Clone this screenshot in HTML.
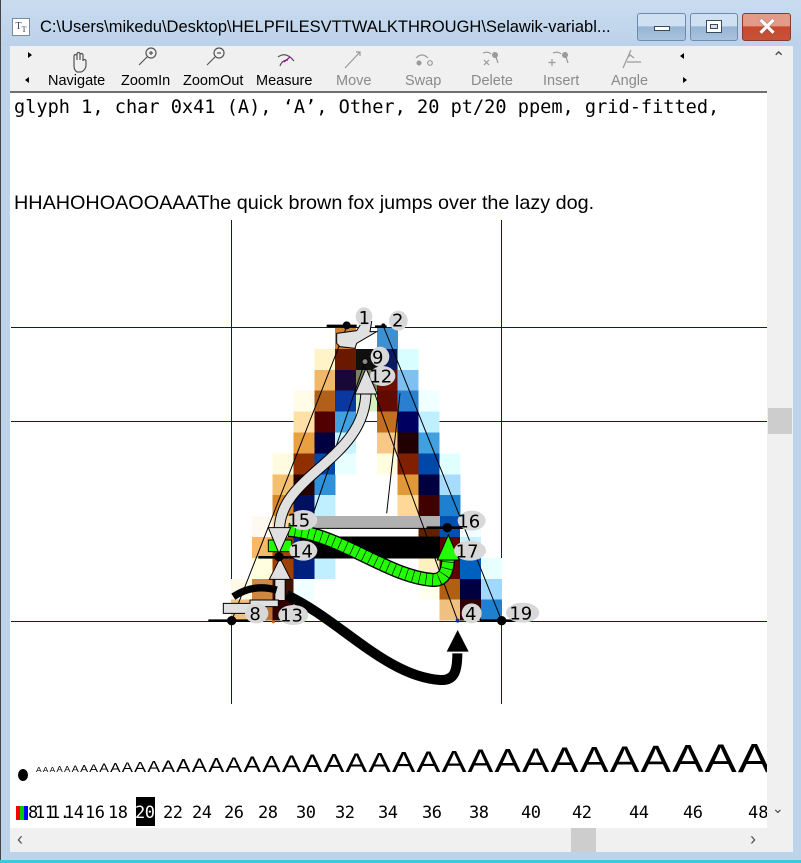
<!DOCTYPE html>
<html><head><meta charset="utf-8"><style>
*{margin:0;padding:0;box-sizing:border-box}
body{width:801px;height:863px;overflow:hidden;background:#bcd3ea;position:relative;font-family:"Liberation Sans",sans-serif}
.a{position:absolute}
.tb{font-size:14.5px;top:73px;white-space:nowrap}
.g{color:#8a8a8a}
.num{font-family:"DejaVu Sans Mono","Liberation Mono",monospace;font-size:17px;top:803px;letter-spacing:-0.5px}
</style></head><body>
<div class="a" style="left:0;top:0;width:801px;height:46px;background:linear-gradient(#c9dbef,#bcd2ea)"></div>
<div class="a" style="left:0;top:0;width:1px;height:863px;background:#444"></div>
<div class="a" style="left:12px;top:18px;width:18px;height:18px;border:1px solid #7a8a9a;background:#fff;font:10px 'Liberation Serif',serif;color:#345;line-height:15px;text-align:center">T<sub style="font-size:8px">T</sub></div>
<div class="a" style="left:40px;top:18px;font-size:16.5px;color:#000;white-space:nowrap">C:\Users\mikedu\Desktop\HELPFILESVTTWALKTHROUGH\Selawik-variabl...</div>
<div class="a" style="left:637px;top:13px;width:49px;height:28px;border:1px solid #6d8bad;border-radius:3px;background:linear-gradient(#cfe0f3 45%,#98b4d4 50%,#a9c2df)"></div>
<div class="a" style="left:654px;top:26px;width:16px;height:5px;background:#fff;border:1px solid #3a4a5a"></div>
<div class="a" style="left:690px;top:13px;width:48px;height:28px;border:1px solid #6d8bad;border-radius:3px;background:linear-gradient(#cfe0f3 45%,#98b4d4 50%,#a9c2df)"></div>
<div class="a" style="left:706px;top:20px;width:16px;height:13px;background:#fff;border:1px solid #3a4a5a"><div style="margin:3px;height:5px;border:1px solid #3a4a5a;background:#cfe0f3"></div></div>
<div class="a" style="left:742px;top:13px;width:49px;height:28px;border:1px solid #8a3a2a;border-radius:3px;background:linear-gradient(#e49a88 45%,#c8492e 50%,#c6523a)"></div>
<div class="a" style="left:757px;top:13px;font:bold 24px 'Liberation Sans',sans-serif;color:#fff;text-shadow:0 0 1px #333">✕</div>

<div class="a" style="left:10px;top:46px;width:783px;height:806px;background:#f0f0f0"></div>
<div class="a" style="left:10px;top:91px;width:757px;height:2px;background:#707070"></div>
<div class="a" style="left:10px;top:93px;width:757px;height:735px;background:#fff"></div>

<div class="a" style="left:28px;top:52px;border-left:4px solid #000;border-top:3px solid transparent;border-bottom:3px solid transparent"></div>
<div class="a" style="left:25px;top:77px;border-right:4px solid #000;border-top:3px solid transparent;border-bottom:3px solid transparent"></div>
<div class="a" style="left:680px;top:53px;border-right:4px solid #000;border-top:3px solid transparent;border-bottom:3px solid transparent"></div>
<div class="a" style="left:683px;top:77px;border-left:4px solid #000;border-top:3px solid transparent;border-bottom:3px solid transparent"></div>

<svg class="a" style="left:0;top:44px" width="700" height="30" viewBox="0 44 700 30" fill="none" stroke="#555" stroke-width="1.2">
<path d="M74 66 v-10 a1.5 1.5 0 0 1 3 0 v4 v-6 a1.5 1.5 0 0 1 3 0 v6 v-5 a1.5 1.5 0 0 1 3 0 v6 a1.5 1.5 0 0 1 3 0 v4 q0 5 -5 7 h-4 q-3 -2 -3 -6z"/>
<circle cx="151" cy="53" r="5"/><path d="M147 57 l-8 8 M149 53 h4 M151 51 v4"/>
<circle cx="219" cy="53" r="5"/><path d="M215 57 l-8 8 M217 53 h4"/>
<path d="M278 57 q8 -6 16 4 M280 66 q2 -6 8 -6" /><path d="M284 62 l6 -5" stroke="#b000b0"/>
<path d="M345 68 l15 -16 M356 52 h4 v4" stroke="#999"/>
<path d="M416 58 q6 -6 12 0" stroke="#999"/><circle cx="419" cy="63" r="2.5" fill="#999" stroke="none"/><circle cx="430" cy="63" r="2.3" stroke="#999"/>
<path d="M483 53 q5 -2 8 1 M484 65 l5 -5 M489 65 l-5 -5" stroke="#999"/><circle cx="495" cy="55" r="3" fill="#999" stroke="none"/><path d="M496 57 l2 6" stroke="#999"/>
<path d="M553 53 q5 -2 8 1 M552 66 v-7 M548.5 62.5 h7" stroke="#999"/><circle cx="565" cy="55" r="3" fill="#999" stroke="none"/><path d="M566 57 l2 6"  stroke="#999"/>
<path d="M623 68 l8 -18 M627 62 h14 M629 54 l5 4 M629 54 v3" stroke="#999"/>
</svg>
<div class="a tb" style="left:48px">Navigate</div>
<div class="a tb" style="left:121px">ZoomIn</div>
<div class="a tb" style="left:183px">ZoomOut</div>
<div class="a tb" style="left:256px">Measure</div>
<div class="a tb g" style="left:336px">Move</div>
<div class="a tb g" style="left:405px">Swap</div>
<div class="a tb g" style="left:471px">Delete</div>
<div class="a tb g" style="left:543px">Insert</div>
<div class="a tb g" style="left:611px">Angle</div>

<div class="a" style="left:768px;top:408px;width:24px;height:26px;background:#cdcdcd"></div>
<div class="a" style="left:772px;top:48px;font-size:16px;color:#444">&#8963;</div>
<div class="a" style="left:772px;top:800px;font-size:14px;color:#444">&#8964;</div>
<div class="a" style="left:10px;top:828px;width:757px;height:24px;background:#f0f0f0"></div>
<div class="a" style="left:571px;top:828px;width:25px;height:24px;background:#cdcdcd"></div>
<div class="a" style="left:17px;top:829px;font-size:18px;color:#555">‹</div>
<div class="a" style="left:750px;top:829px;font-size:18px;color:#555">›</div>
<div class="a" style="left:0;top:860px;width:801px;height:3px;background:#3cc8e0"></div>

<div class="a" style="left:14px;top:97px;font-family:'DejaVu Sans Mono','Liberation Mono',monospace;font-size:18.6px;white-space:nowrap">glyph 1, char 0x41 (A), ‘A’, Other, 20 pt/20 ppem, grid-fitted,</div>
<div class="a" style="left:14px;top:192px;font-size:19.8px;white-space:nowrap">HHAHOHOAOOAAAThe quick brown fox jumps over the lazy dog.</div>

<div class="a" style="left:231px;top:220px;width:1px;height:484px;background:#0000e0"></div>
<div class="a" style="left:501px;top:220px;width:1px;height:484px;background:#0000e0"></div>
<div class="a" style="left:11px;top:327px;width:756px;height:1px;background:#0000e0"></div>
<div class="a" style="left:11px;top:421px;width:756px;height:1px;background:#0000e0"></div>
<div class="a" style="left:11px;top:621px;width:756px;height:1px;background:#0000e0"></div>

<svg class="a" style="left:200px;top:300px" width="350" height="400" viewBox="0 0 1050 1200">
<g shape-rendering="crispEdges">
<rect x="405.5" y="84" width="63" height="63" fill="#d08030"/><rect x="530.5" y="84" width="63" height="63" fill="#4090d0"/>
<rect x="343" y="146.7" width="63" height="63" fill="#fff4c8"/><rect x="405.5" y="146.7" width="63" height="63" fill="#6a1800"/><rect x="468" y="146.7" width="63" height="63" fill="#101010"/><rect x="530.5" y="146.7" width="63" height="63" fill="#0a1a60"/><rect x="593" y="146.7" width="63" height="63" fill="#d8ffff"/>
<rect x="343" y="209.4" width="63" height="63" fill="#f0b868"/><rect x="405.5" y="209.4" width="63" height="63" fill="#180838"/><rect x="468" y="209.4" width="63" height="63" fill="#808060"/><rect x="530.5" y="209.4" width="63" height="63" fill="#701000"/><rect x="593" y="209.4" width="63" height="63" fill="#80c0f0"/>
<rect x="280.5" y="272.1" width="63" height="63" fill="#fffde8"/><rect x="343" y="272.1" width="63" height="63" fill="#b06018"/><rect x="405.5" y="272.1" width="63" height="63" fill="#0838a0"/><rect x="468" y="272.1" width="63" height="63" fill="#d8f0c0"/><rect x="530.5" y="272.1" width="63" height="63" fill="#600a00"/><rect x="593" y="272.1" width="63" height="63" fill="#2a80d0"/><rect x="655.5" y="272.1" width="63" height="63" fill="#f0ffff"/>
<rect x="280.5" y="334.8" width="63" height="63" fill="#ffe0a8"/><rect x="343" y="334.8" width="63" height="63" fill="#500000"/><rect x="405.5" y="334.8" width="63" height="63" fill="#40a0e0"/><rect x="530.5" y="334.8" width="63" height="63" fill="#c07020"/><rect x="593" y="334.8" width="63" height="63" fill="#000060"/><rect x="655.5" y="334.8" width="63" height="63" fill="#c0f0ff"/>
<rect x="280.5" y="397.5" width="63" height="63" fill="#e8a040"/><rect x="343" y="397.5" width="63" height="63" fill="#000040"/><rect x="405.5" y="397.5" width="63" height="63" fill="#c8f4ff"/><rect x="530.5" y="397.5" width="63" height="63" fill="#f8c888"/><rect x="593" y="397.5" width="63" height="63" fill="#200000"/><rect x="655.5" y="397.5" width="63" height="63" fill="#40a0e0"/>
<rect x="218" y="460.2" width="63" height="63" fill="#fffbe0"/><rect x="280.5" y="460.2" width="63" height="63" fill="#903000"/><rect x="343" y="460.2" width="63" height="63" fill="#0048a8"/><rect x="405.5" y="460.2" width="63" height="63" fill="#e8ffff"/><rect x="530.5" y="460.2" width="63" height="63" fill="#ffffe0"/><rect x="593" y="460.2" width="63" height="63" fill="#802000"/><rect x="655.5" y="460.2" width="63" height="63" fill="#0048a8"/><rect x="718" y="460.2" width="63" height="63" fill="#e0ffff"/>
<rect x="218" y="522.9" width="63" height="63" fill="#f4c070"/><rect x="280.5" y="522.9" width="63" height="63" fill="#280000"/><rect x="343" y="522.9" width="63" height="63" fill="#3090d8"/><rect x="593" y="522.9" width="63" height="63" fill="#e09838"/><rect x="655.5" y="522.9" width="63" height="63" fill="#000040"/><rect x="718" y="522.9" width="63" height="63" fill="#a8dcff"/>
<rect x="218" y="585.6" width="63" height="63" fill="#d88828"/><rect x="280.5" y="585.6" width="63" height="63" fill="#001060"/><rect x="343" y="585.6" width="63" height="63" fill="#c0f0ff"/><rect x="593" y="585.6" width="63" height="63" fill="#ffd898"/><rect x="655.5" y="585.6" width="63" height="63" fill="#400000"/><rect x="718" y="585.6" width="63" height="63" fill="#2080d0"/>
<rect x="155.5" y="648.3" width="63" height="63" fill="#fffaf0"/><rect x="218" y="648.3" width="63" height="63" fill="#ffd8a0"/><rect x="280.5" y="648.3" width="63" height="63" fill="#6a2000"/><rect x="655.5" y="648.3" width="63" height="63" fill="#602000"/><rect x="718" y="648.3" width="63" height="63" fill="#0050b0"/><rect x="780.5" y="648.3" width="63" height="63" fill="#f0ffff"/>
<rect x="155.5" y="711" width="63" height="63" fill="#f8b868"/><rect x="218" y="711" width="63" height="63" fill="#a04800"/><rect x="280.5" y="711" width="63" height="63" fill="#002080"/><rect x="718" y="711" width="63" height="63" fill="#600000"/><rect x="780.5" y="711" width="63" height="63" fill="#c8f0ff"/>
<rect x="155.5" y="773.7" width="63" height="63" fill="#ffffe0"/><rect x="218" y="773.7" width="63" height="63" fill="#a04000"/><rect x="280.5" y="773.7" width="63" height="63" fill="#002080"/><rect x="343" y="773.7" width="63" height="63" fill="#c0f0ff"/><rect x="655.5" y="773.7" width="63" height="63" fill="#fff0c0"/><rect x="718" y="773.7" width="63" height="63" fill="#600000"/><rect x="780.5" y="773.7" width="63" height="63" fill="#0060c0"/><rect x="843" y="773.7" width="63" height="63" fill="#e8ffff"/>
<rect x="93" y="836.4" width="63" height="63" fill="#fffae8"/><rect x="155.5" y="836.4" width="63" height="63" fill="#d08840"/><rect x="218" y="836.4" width="63" height="63" fill="#401000"/><rect x="280.5" y="836.4" width="63" height="63" fill="#f0ffff"/><rect x="655.5" y="836.4" width="63" height="63" fill="#fffff0"/><rect x="718" y="836.4" width="63" height="63" fill="#b06010"/><rect x="780.5" y="836.4" width="63" height="63" fill="#000040"/><rect x="843" y="836.4" width="63" height="63" fill="#a0d8ff"/>
<rect x="93" y="899.1" width="63" height="63" fill="#f0c080"/><rect x="155.5" y="899.1" width="63" height="63" fill="#c07030"/><rect x="218" y="899.1" width="63" height="63" fill="#300000"/><rect x="718" y="899.1" width="63" height="63" fill="#f0c080"/><rect x="780.5" y="899.1" width="63" height="63" fill="#300000"/><rect x="843" y="899.1" width="63" height="63" fill="#2080d0"/>
<rect x="340" y="648" width="380" height="37" fill="#b0b0b0"/>
<rect x="300" y="710" width="420" height="65" fill="#000"/>
</g>
<g stroke="#000" stroke-width="3" fill="none">
<path d="M440 80 L95 962 M550 78 L905 962 M495 185 L340 640 M520 270 L773 962 M270 685 L742 685 M600 280 L560 640"/>
</g>
<path d="M260 885 C420 960 560 1130 720 1140 C760 1142 772 1120 772 1060" stroke="#000" stroke-width="30" fill="none"/>
<path d="M740 1055 L773 990 L806 1055 Z" fill="#000"/>
<path d="M265 690 C420 700 560 830 700 840 C740 840 745 800 745 760" stroke="#000" stroke-width="42" fill="none"/>
<path d="M265 690 C420 700 560 830 700 840 C740 840 745 800 745 760" stroke="#22ff00" stroke-width="34" fill="none"/>
<path d="M265 690 C420 700 560 830 700 840 C740 840 745 800 745 760" stroke="#000" stroke-width="34" stroke-dasharray="2 18" fill="none"/>
<path d="M712 780 L745 705 L778 780 Z" fill="#22ff00" stroke="#000" stroke-width="3"/>
<path d="M205 755 V720 H275 V755 Z" fill="#22ff00" stroke="#000" stroke-width="3"/>
<g fill="none" stroke-linecap="butt">
<path d="M498 270 C500 480 240 520 238 690" stroke="#000" stroke-width="34"/>
<path d="M498 270 C500 480 240 520 238 690" stroke="#e0e0e0" stroke-width="28"/>
<path d="M240 900 V835" stroke="#000" stroke-width="34"/>
<path d="M240 900 V835" stroke="#e0e0e0" stroke-width="28"/>
<path d="M100 890 Q160 850 230 870" stroke="#000" stroke-width="22"/>
</g>
<path d="M205 683 L237 760 L272 683 Z" fill="#e0e0e0" stroke="#000" stroke-width="3"/>
<path d="M208 838 L240 775 L272 838 Z" fill="#e0e0e0" stroke="#000" stroke-width="3"/>
<path d="M465 282 L498 205 L532 282 Z" fill="#e0e0e0" stroke="#000" stroke-width="3"/>
<path d="M70 910 H150 V900 H235 V920 H150 V940 H70 Z" fill="#e0e0e0" stroke="#000" stroke-width="3"/>
<path d="M410 100 L470 92 L490 60 L515 65 L510 95 L530 95 L470 130 L465 145 L420 140 L410 130 Z" fill="#e0e0e0" stroke="#000" stroke-width="3"/>
<g stroke="#000" stroke-width="8">
<path d="M380 78 H470 M525 80 H560 M680 683 H810 M175 772 H305 M25 962 H170 M840 962 H970"/>
</g>
<g fill="#000"><circle cx="440" cy="76" r="12"/><circle cx="550" cy="76" r="6"/><circle cx="742" cy="683" r="14"/><circle cx="237" cy="770" r="14"/><circle cx="95" cy="962" r="14"/><circle cx="905" cy="962" r="14"/><circle cx="773" cy="962" r="6" fill="#1030a0"/><circle cx="220" cy="965" r="5" fill="#c06020"/><circle cx="495" cy="185" r="9" fill="#888" stroke="#000" stroke-width="3"/></g>
<g fill="#d8d8d8"><ellipse cx="492" cy="50" rx="25" ry="28"/><ellipse cx="595" cy="62" rx="28" ry="30"/><ellipse cx="540" cy="170" rx="28" ry="30"/><ellipse cx="548" cy="228" rx="38" ry="30"/><ellipse cx="310" cy="660" rx="42" ry="30"/><ellipse cx="815" cy="662" rx="42" ry="30"/><ellipse cx="810" cy="752" rx="48" ry="30"/><ellipse cx="310" cy="752" rx="42" ry="30"/><ellipse cx="170" cy="940" rx="35" ry="30"/><ellipse cx="280" cy="945" rx="45" ry="30"/><ellipse cx="815" cy="940" rx="30" ry="30"/><ellipse cx="968" cy="938" rx="50" ry="30"/></g>
<g font-family="DejaVu Sans,sans-serif" font-size="54" fill="#000">
<text x="476" y="72">1</text><text x="576" y="80">2</text><text x="516" y="190">9</text><text x="508" y="248">12</text><text x="262" y="680">15</text><text x="772" y="682">16</text><text x="767" y="772">17</text><text x="270" y="772">14</text><text x="148" y="960">8</text><text x="240" y="964">13</text><text x="795" y="960">4</text><text x="928" y="958">19</text>
</g>
</svg>

<div class="a" style="left:18px;top:769px;width:10px;height:12px;border-radius:50%;background:#000"></div>
<div class="a" style="left:36px;top:720px;width:731px;height:70px;overflow:hidden">
<div style="white-space:nowrap;line-height:76px;letter-spacing:1px;transform:scaleX(1.2);transform-origin:0 0;width:900px">
<span style="font-size:7px">A</span><span style="font-size:7px">A</span><span style="font-size:7px">A</span><span style="font-size:8px">A</span><span style="font-size:8px">A</span><span style="font-size:9px">A</span><span style="font-size:10px">A</span><span style="font-size:11px">A</span><span style="font-size:12px">A</span><span style="font-size:13px">A</span><span style="font-size:14px">A</span><span style="font-size:15px">A</span><span style="font-size:16px">A</span><span style="font-size:17px">A</span><span style="font-size:18px">A</span><span style="font-size:19px">A</span><span style="font-size:20px">A</span><span style="font-size:21px">A</span><span style="font-size:22px">A</span><span style="font-size:23px">A</span><span style="font-size:24px">A</span><span style="font-size:25px">A</span><span style="font-size:26px">A</span><span style="font-size:27px">A</span><span style="font-size:28px">A</span><span style="font-size:29px">A</span><span style="font-size:30px">A</span><span style="font-size:31px">A</span><span style="font-size:32px">A</span><span style="font-size:33px">A</span><span style="font-size:34px">A</span><span style="font-size:35px">A</span><span style="font-size:36px">A</span><span style="font-size:37px">A</span><span style="font-size:38px">A</span><span style="font-size:39px">A</span><span style="font-size:40px">A</span><span style="font-size:41px">A</span><span style="font-size:42px">A</span>
</div></div>

<div class="a" style="left:16px;top:806px;width:4px;height:14px;background:#f00"></div>
<div class="a" style="left:20px;top:806px;width:4px;height:14px;background:#0c0"></div>
<div class="a" style="left:24px;top:806px;width:4px;height:14px;background:#00f"></div>
<div class="a" style="left:136px;top:797px;width:19px;height:29px;background:#000"></div>
<div class="a num" style="left:28px">8</div>
<div class="a num" style="left:35px">11</div>
<div class="a num" style="left:50px">1.</div>
<div class="a num" style="left:64px">14</div>
<div class="a num" style="left:85px">16</div>
<div class="a num" style="left:108px">18</div>
<div class="a num" style="left:135px;color:#fff">20</div>
<div class="a num" style="left:163px">22</div>
<div class="a num" style="left:192px">24</div>
<div class="a num" style="left:224px">26</div>
<div class="a num" style="left:258px">28</div>
<div class="a num" style="left:296px">30</div>
<div class="a num" style="left:335px">32</div>
<div class="a num" style="left:378px">34</div>
<div class="a num" style="left:422px">36</div>
<div class="a num" style="left:469px">38</div>
<div class="a num" style="left:521px">40</div>
<div class="a num" style="left:572px">42</div>
<div class="a num" style="left:629px">44</div>
<div class="a num" style="left:683px">46</div>
<div class="a" style="left:748px;top:803px;width:19px;overflow:hidden;font-family:'DejaVu Sans Mono',monospace;font-size:17px">48</div>
</body></html>
